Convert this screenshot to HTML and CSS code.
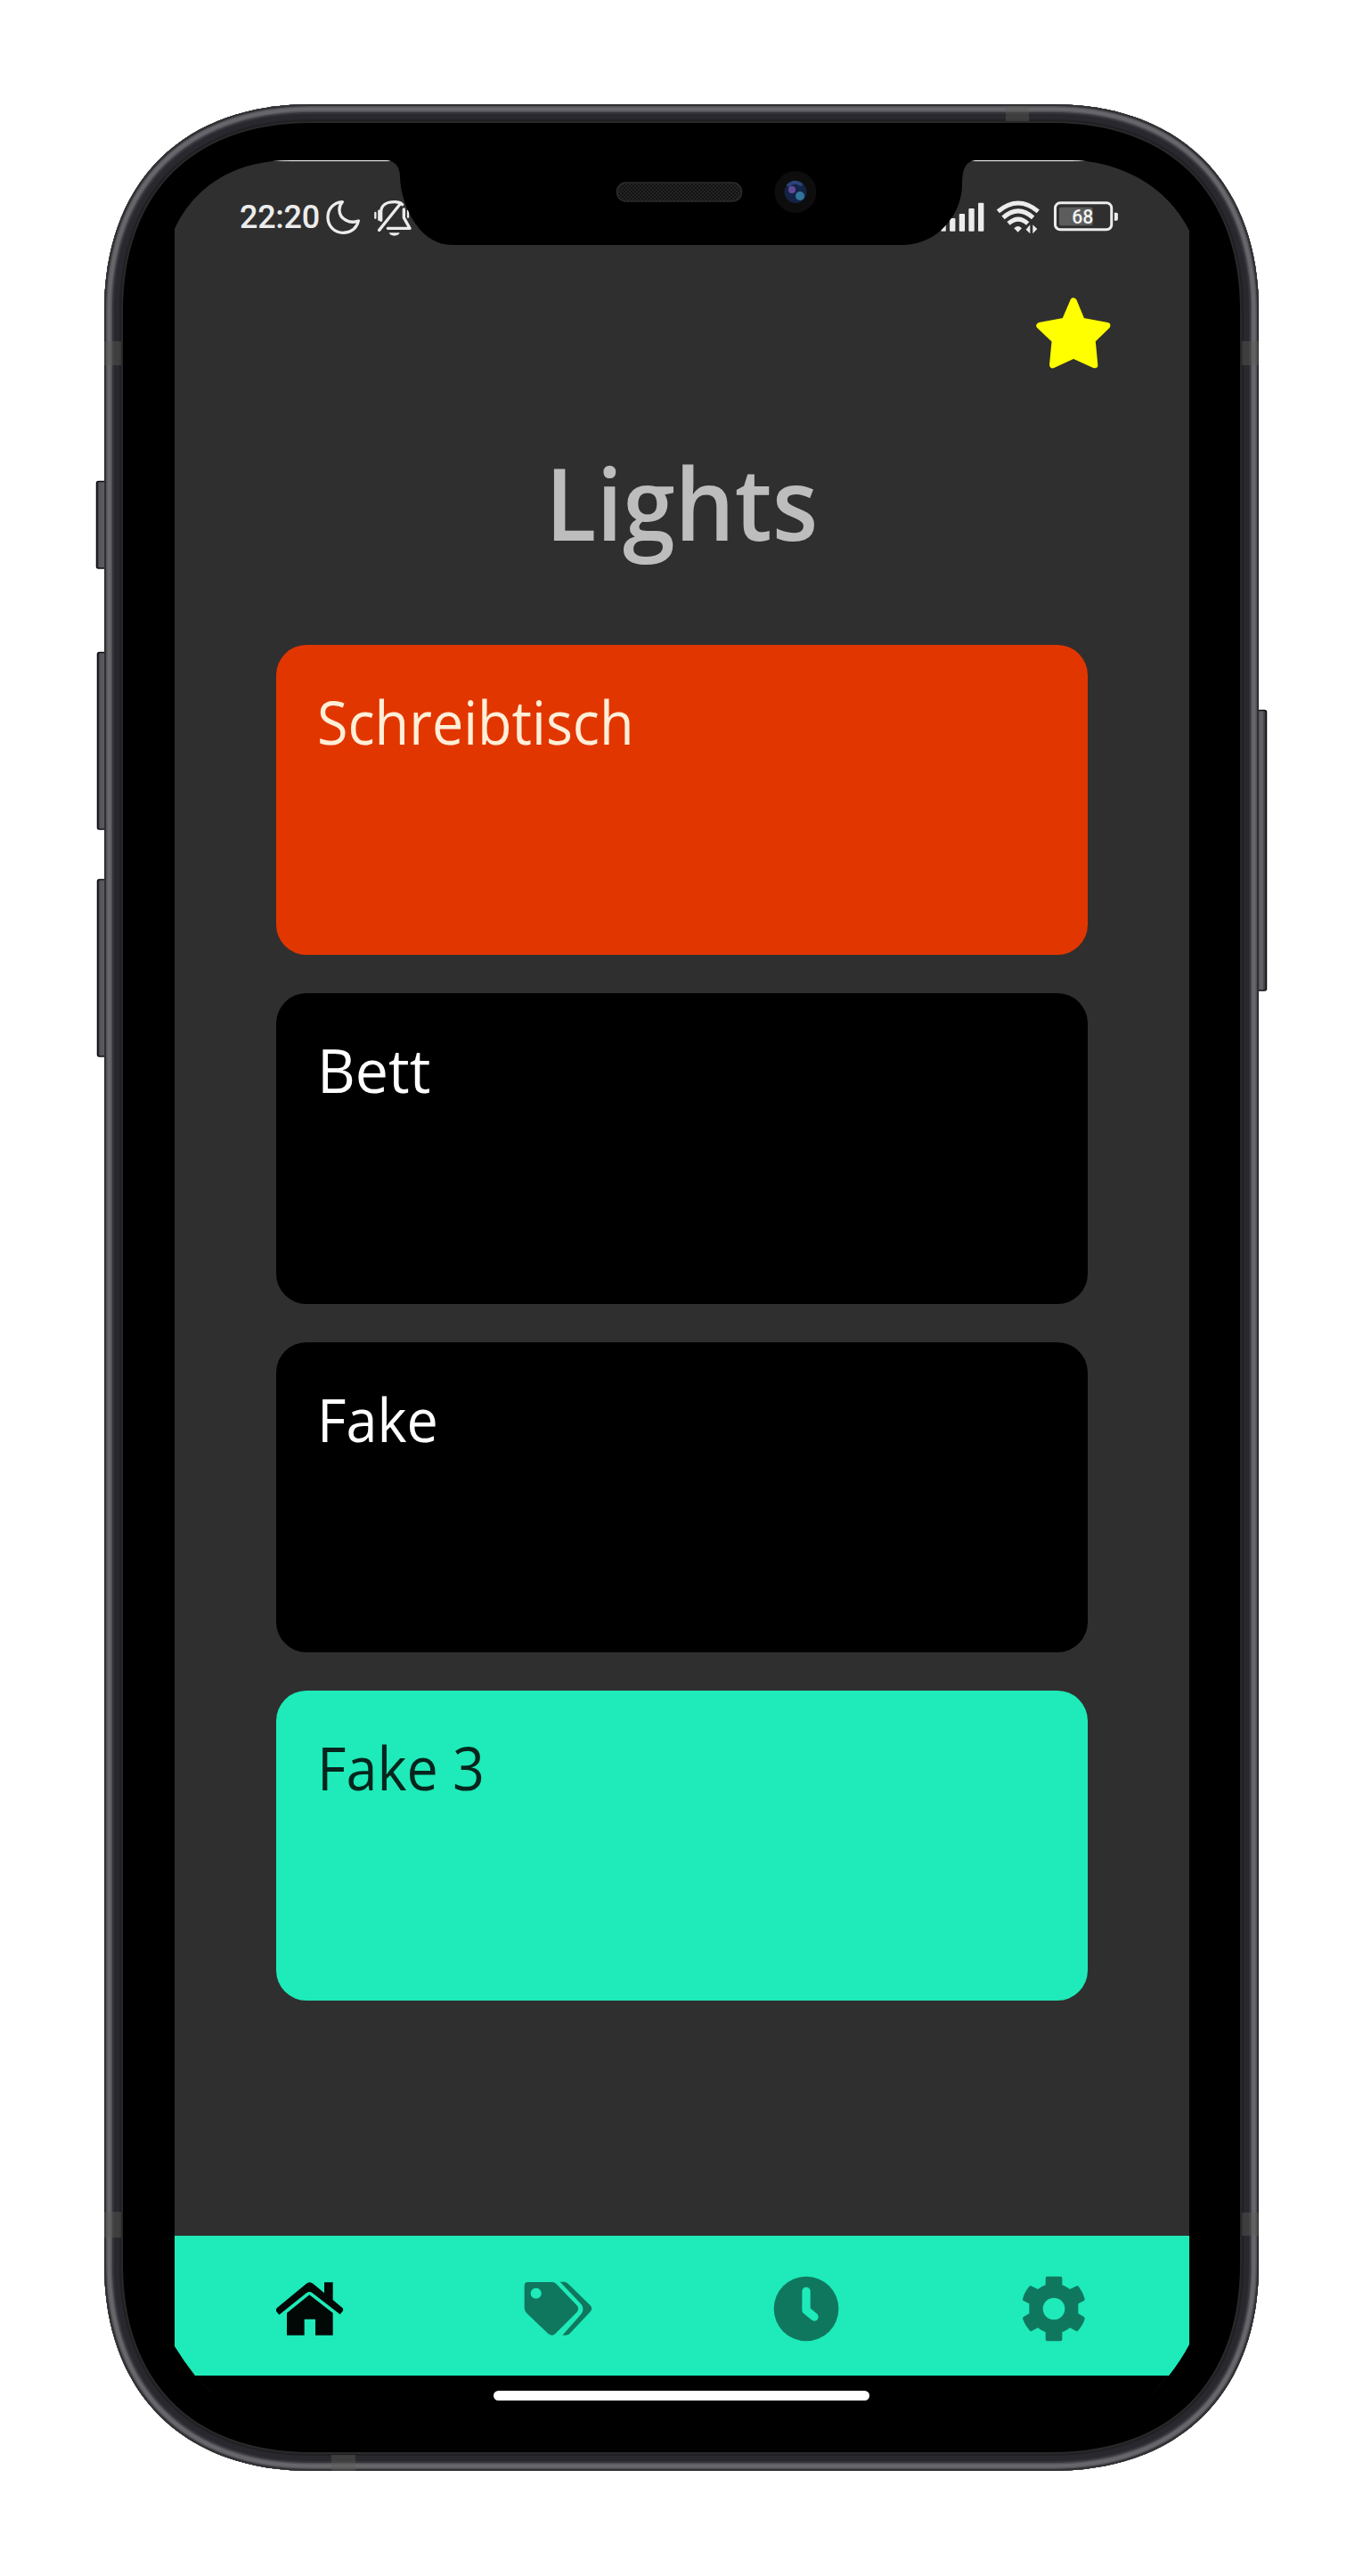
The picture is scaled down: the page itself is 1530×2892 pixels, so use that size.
FILE: index.html
```html
<!DOCTYPE html>
<html lang="de">
<head>
<meta charset="utf-8">
<title>Lights</title>
<link rel="stylesheet" href="styles.css">
</head>
<body>
<div class="device">
  <svg class="frame" viewBox="0 0 1530 2892" aria-hidden="true">
    <defs>
      <path id="case" d="M117 349C117 205 205 117 349 117H1181C1325 117 1413 205 1413 349V2542C1413 2686 1325 2774 1181 2774H349C205 2774 117 2686 117 2542Z"/>
      <clipPath id="caseClip"><use href="#case"/></clipPath>
      <linearGradient id="keyL"><stop offset="0" stop-color="#1b1b20"/><stop offset=".2" stop-color="#55555b"/><stop offset=".6" stop-color="#5c5c62"/><stop offset="1" stop-color="#37373b"/></linearGradient>
      <linearGradient id="keyR"><stop offset="0" stop-color="#3c3c41"/><stop offset=".65" stop-color="#66656b"/><stop offset="1" stop-color="#25252a"/></linearGradient>
      <pattern id="mesh" width="4" height="4" patternUnits="userSpaceOnUse"><path fill="#131313" d="M0 0h4v4H0z"/><path fill="#242424" d="M0 0h2v2H0zM2 2h2v2H2z"/></pattern>
      <radialGradient id="lens"><stop offset="0" stop-color="#14254a"/><stop offset="1" stop-color="#142344"/></radialGradient>
    </defs>
    <g stroke="#101014" stroke-width="1.5">
      <rect x="108.5" y="540.5" width="14" height="97.500" rx="2" fill="url(#keyL)"/>
      <rect x="109.5" y="732.5" width="14" height="198.500" rx="2" fill="url(#keyL)"/>
      <rect x="109.5" y="987.5" width="14" height="198.500" rx="2" fill="url(#keyL)"/>
      <rect x="1407" y="797.500" width="14.500" height="314.500" rx="2" fill="url(#keyR)"/>
    </g>
    <g clip-path="url(#caseClip)" fill="none">
      <use href="#case" fill="#000"/>
      <use href="#case" stroke="#292929" stroke-width="42"/>
      <use href="#case" stroke="#202024" stroke-width="38"/>
      <use href="#case" stroke="#29282e" stroke-width="34"/>
      <use href="#case" stroke="#35343a" stroke-width="22"/>
      <use href="#case" stroke="#515056" stroke-width="18"/>
      <use href="#case" stroke="#67666b" stroke-width="15"/>
      <use href="#case" stroke="#525156" stroke-width="7"/>
      <use href="#case" stroke="#303033" stroke-width="4"/>
      <g fill="#5c5c59" fill-opacity=".42">
        <path d="M117 383h19v27h-19zM117 2483h19v29h-19zM1394 383h19v27h-19zM1394 2484h19v26h-19zM1129 119h26v17h-26zM372 2756h27v18h-27z"/>
      </g>
    </g>
    <rect x="692.500" y="205" width="140" height="21" rx="10" fill="url(#mesh)" stroke="#2b2b2b" stroke-width="1.500"/>
    <circle cx="893" cy="215.500" r="23.500" fill="#0d0d0d"/>
    <circle cx="893" cy="215.500" r="12.500" fill="url(#lens)"/>
    <path d="M884 209q8-8 16-1" stroke="#2c4379" stroke-width="4" fill="none"/>
    <circle cx="889" cy="213" r="4" fill="#604a96"/>
    <circle cx="898" cy="220" r="5" fill="#33749c"/>
  </svg>

  <main class="screen">
    <header class="status">
      <span class="time">22:20</span>
      <svg class="status-left" viewBox="795 365 297 135" fill="none" stroke="#ececec" stroke-width="10" stroke-linecap="round" stroke-linejoin="round">
        <path d="M853 379C822 381 804 404 804 431C804 461 827 483 855 483C882 483 902 467 907 443C879 454 844 437 843 408C842 396 846 387 853 379Z"/>
        <path d="M977 474L1050 383M983 441V413C983 390 1003 379 1029 379C1041 379 1050 383 1055 388M1060 404V432L1080 468H1006"/>
        <path d="M964 416V433M976 409V439M1074 410V430" stroke-width="7"/>
        <path d="M1010 483H1046Q1042 493 1028 493Q1014 493 1010 483Z" fill="#ececec" stroke="none"/>
      </svg>
      <svg class="status-right" viewBox="130 370 610 130">
        <g fill="#ececec">
          <rect x="137" y="448" width="16" height="32"/><rect x="166" y="436" width="19" height="44" rx="3"/><rect x="198" y="421" width="19" height="59" rx="3"/><rect x="230" y="403" width="19" height="77" rx="3"/><rect x="262" y="384" width="19" height="96" rx="3"/>
          <path d="M383 470Q396 456 409 470L396 483Z"/>
          <path d="M423 474L437 458V488ZM446 458V488L461 472Z"/>
          <path d="M721 417h7q5 0 5 5v17q0 5-5 5h-7z"/>
        </g>
        <g fill="none" stroke="#ececec" stroke-width="15">
          <path d="M329 413Q397 357 464 413M346 434Q397 389 447 434M364 454Q397 425 429 454"/>
          <rect x="521.500" y="384.500" width="190" height="90" rx="17" stroke-width="9"/>
        </g>
        <rect x="535" y="399" width="113" height="62" rx="6" fill="#5c5c5c"/>
        <text class="battery" x="614" y="454" text-anchor="middle">68</text>
      </svg>
    </header>

    <div class="toolbar">
      <svg class="star" viewBox="459 702 252 240"><path d="M585 714L613 781L698 797L648 846L656 929L585 897L515 929L523 846L471 797L556 781Z" fill="#ff0" stroke="#ff0" stroke-width="22" stroke-linejoin="round"/></svg>
    </div>

    <h1 class="title"><span>Lights</span></h1>

    <section class="cards">
      <article class="card card-red"><span>Schreibtisch</span></article>
      <article class="card"><span class="wide">Bett</span></article>
      <article class="card"><span>Fake</span></article>
      <article class="card card-mint"><span>Fake 3</span></article>
    </section>

    <nav class="tabs">
      <svg class="active" viewBox="655 313 240 228">
        <path d="M697 441L773 380L852 441V516H793V462H756V516H697Z"/>
        <path d="M663 425L763 342Q773 333 785 342L823 374V338H852V397L885 425Q889 430 885 435L876 446L783 374Q773 366 763 374L671 447L661 435Q660 428 663 425Z"/>
      </svg>
      <svg viewBox="138 223 240 228">
        <path fill-rule="evenodd" d="M158 247H240Q247 247 253 253L323 326Q332 337 323 348L250 421Q240 431 226 421L153 351Q146 344 146 334V259Q146 247 158 247ZM185 267a18 18 0 1 0 .1 0Z"/>
        <path d="M266 246H281Q288 247 293 252L368 326Q377 337 368 347L299 420Q292 427 274 426L337 355Q350 337 337 321Z"/>
      </svg>
      <svg viewBox="974 223 240 228">
        <circle cx="1094" cy="337" r="109"/>
        <path class="hands" d="M1094 278V342L1121 364"/>
      </svg>
      <svg viewBox="490 313 240 228">
        <path fill-rule="evenodd" d="M587 318H633Q638 318 638 324V347Q652 352 664 361L687 350Q691 349 694 353Q709 373 714 394Q715 398 711 400L692 410V443L711 454Q715 457 714 461Q708 482 692 500Q689 504 685 502L664 491Q652 501 638 506V530Q638 536 633 536H587Q582 536 582 530V506Q568 501 556 491L535 502Q531 504 528 500Q512 482 505 461Q504 457 508 454L527 443V410L508 400Q504 398 505 394Q511 371 526 353Q529 349 533 350L556 361Q568 352 582 347V324Q582 318 587 318ZM610 390a37 37 0 1 0 .1 0Z"/>
      </svg>
    </nav>
    <div class="home-indicator"></div>
  </main>
</div>
</body>
</html>
```
FILE: styles.css
```css
* { box-sizing: border-box; }

body {
  margin: 0;
  background: #fff;
  font-family: "Open Sans", sans-serif;
}

.device {
  position: relative;
  width: 1530px;
  height: 2892px;
  padding: 180px 195px 0 196px;
}

/* phone body drawn behind the screen */
.frame {
  position: absolute;
  inset: 0;
  width: 1530px;
  height: 2892px;
}

.screen {
  position: relative;
  display: flex;
  flex-direction: column;
  height: 2540px;
  border-top: 1px solid #fff;
  background: #2f2f2f;
  clip-path: path("M0 77C17 40 55 0 131 0H237C246 0 253 6 253 18C253 45 272 95 311 95H817C857 95 884 60 884 27C884 8 889 0 901 0H1007C1050 0 1111 22 1139 79V2452Q1129 2471 1116 2487L1098 2507V2540H42V2507L23 2487Q11 2472 0 2454Z");
}

.status {
  display: flex;
  height: 140px;
  padding: 40px 78px 0 73px;
}

.time {
  width: 96px;
  margin-top: 2px;
  font: 500 36px/42px Roboto, sans-serif;
  letter-spacing: -.3px;
  color: #ececec;
}

.status-left {
  width: 99px;
  height: 45px;
  margin-top: 1px;
}

.status-right {
  width: 203.300px;
  height: 43.300px;
  margin: 2px 0 0 auto;
}

.battery {
  font: 500 64px Roboto, sans-serif;
  fill: #f2f2f2;
}

.toolbar {
  display: flex;
  justify-content: flex-end;
  height: 94px;
  padding: 13px 88px 0 0;
}

.star {
  width: 84px;
  height: 80px;
}

.title {
  height: 309px;
  margin: 0;
  padding-top: 73px;
  font-size: 112px;
  line-height: 152px;
  font-weight: 600;
  text-align: center;
  color: #bdbdbd;
}

.title span {
  display: inline-block;
  transform: scaleX(.945);
}

.cards {
  display: flex;
  flex-direction: column;
  gap: 43px;
  height: 1786px;
  padding: 0 114px;
}

.card {
  height: 348.300px;
  padding: 40px 46px;
  border-radius: 34px;
  background: #000;
  color: #fff;
  font-size: 68px;
  line-height: 92px;
}

.card span {
  display: inline-block;
  transform: scaleX(.925);
  transform-origin: left;
}

.card .wide { transform: scaleX(.975); }

.card-red { background: #e23600; color: #ffefd8; }
.card-mint { background: #1eebb9; color: #06251d; }

.tabs {
  display: grid;
  grid-template-columns: repeat(4, 1fr);
  place-items: center;
  height: 157px;
  padding: 7px 13px 0;
  background: #1eebb9;
}

.tabs svg {
  width: 80px;
  height: 76px;
  fill: #10775f;
}

.tabs .active { fill: #020806; }

.hands {
  fill: none;
  stroke: #1eebb9;
  stroke-width: 28px;
  stroke-linecap: round;
  stroke-linejoin: round;
}

.home-indicator {
  flex: 1;
  background: #000;
  padding: 17px 359px 0 358px;
}

.home-indicator::before {
  content: "";
  display: block;
  height: 11px;
  border-radius: 6px;
  background: #fff;
}
```
